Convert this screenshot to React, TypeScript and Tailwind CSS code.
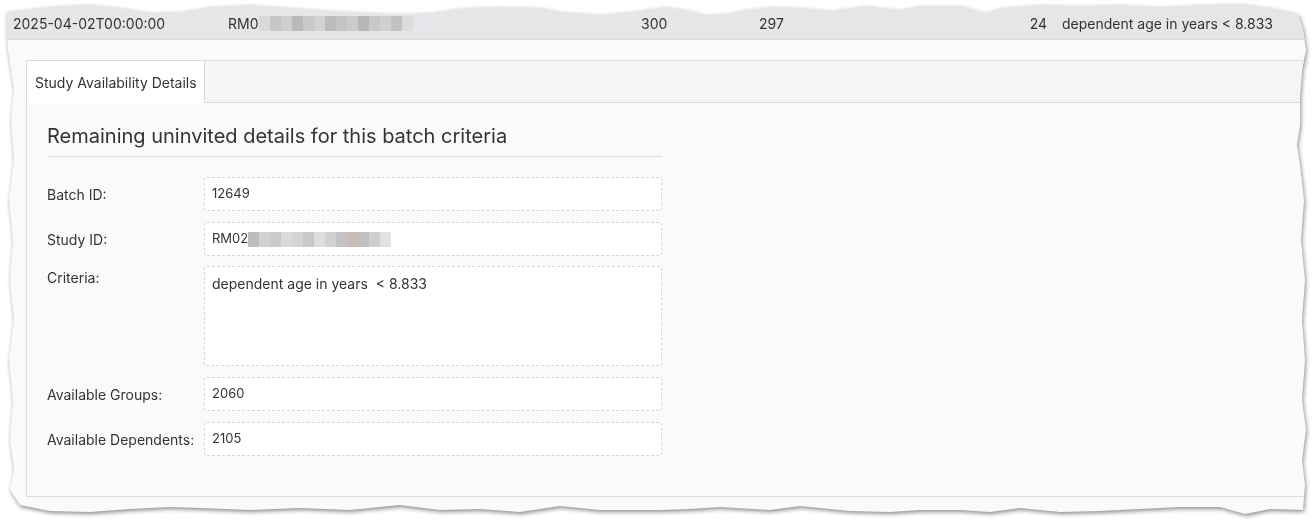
const torn =
  '[clip-path:polygon(7px_12px,30px_9px,60px_6px,90px_5px,120px_8px,150px_13px,180px_12px,210px_7px,250px_5px,290px_8px,330px_11px,370px_13px,400px_14px,430px_13px,465px_8px,500px_7px,540px_8px,560px_12px,600px_15px,630px_12px,665px_7px,685px_10px,705px_15px,725px_14px,745px_10px,770px_7px,800px_8px,830px_11px,865px_6px,900px_10px,920px_6px,960px_6px,985px_13px,1000px_8px,1040px_5px,1080px_6px,1120px_5px,1160px_7px,1200px_5px,1240px_4px,1270px_8px,1298px_14px,1303px_30px,1306px_50px,1302px_70px,1300px_95px,1300px_125px,1297px_145px,1300px_165px,1304px_200px,1301px_240px,1305px_280px,1302px_320px,1305px_360px,1302px_400px,1306px_430px,1302px_460px,1305px_485px,1303px_510px,1270px_509px,1245px_514px,1220px_507px,1180px_507px,1140px_509px,1100px_511px,1060px_512px,1020px_508px,990px_512px,960px_510px,920px_510px,890px_512px,850px_511px,800px_506px,770px_510px,720px_507px,690px_509px,660px_510px,600px_510px,560px_506px,520px_512px,480px_509px,440px_510px,400px_505px,350px_510px,300px_508px,250px_510px,200px_508px,170px_507px,130px_509px,90px_512px,50px_511px,20px_505px,10px_490px,14px_470px,10px_440px,13px_400px,9px_360px,14px_320px,10px_280px,13px_240px,9px_200px,14px_160px,11px_120px,14px_90px,11px_70px,8px_50px,7px_30px)]'

const blurTop = ['#d9d9d9', '#c6c6c6', '#cfcfcf', '#b9b9b9', '#c9c9c9', '#d3d3d3', '#bdbdbd', '#c4c4c4', '#cbcbcb', '#b7b7b7', '#c8c8c8', '#d0d0d0', '#c2c2c2', '#dcdcdc', '#e3e6ea']
const blurStudy = ['#bdbdbd', '#d2d2d2', '#cacaca', '#dadada', '#d4d4d4', '#c8c8c8', '#dedede', '#d1d1d1', '#c3c3c3', '#c7bcb6', '#c0c0c0', '#cfcfcf', '#e2e2e2']

function Blur({ colors, w }: { colors: string[]; w: number }) {
  return (
    <span className="inline-flex h-[15px] items-stretch">
      {colors.map((c, i) => (
        <span key={i} className="h-full" style={{ width: w, backgroundColor: c }} />
      ))}
    </span>
  )
}

function Field({ label, children, tall }: { label: string; children: React.ReactNode; tall?: boolean }) {
  return (
    <div className={`flex ${tall ? '-mt-px' : ''}`}>
      <div className={`w-[157px] shrink-0 text-[14px] text-[#333] ${tall ? 'pt-[1px]' : 'flex items-center'}`}>
        {label}
      </div>
      <div
        className={`w-[458px] rounded-[3px] border border-dashed border-[#d6d6d6] bg-white px-[7px] text-[13px] text-[#333] ${
          tall ? 'h-[100px] pt-[6px] text-[14px]' : 'flex h-[34px] items-center'
        }`}
      >
        {children}
      </div>
    </div>
  )
}

export default function App() {
  return (
    <div className="h-[525px] w-[1316px] bg-white font-['Inter','Noto_Sans',sans-serif]">
      <div className="h-full w-full drop-shadow-[1px_2px_2px_rgba(0,0,0,0.45)]">
        <div className={`h-full w-full bg-[#fafafa] ${torn}`}>
          <div className="flex h-[40px] items-end border-b border-[#dcdcdc] bg-[#e6e6e6] pb-[5px] text-[14px] text-[#333]">
            <span className="ml-[13px] w-[215px]">2025-04-02T00:00:00</span>
            <span className="flex w-[413px] items-center">
              RM0
              <Blur colors={blurTop} w={11} />
            </span>
            <span className="w-[118px]">300</span>
            <span className="flex-1">297</span>
            <span className="mr-[15px]">24</span>
            <span className="mr-[43px]">dependent age in years &lt; 8.833</span>
          </div>

          <div className="ml-[26px] mt-[20px] h-[437px] border-l border-t border-b border-[#dcdcdc]">
            <div className="flex h-[42px] border-b border-[#dcdcdc] bg-[#f5f5f5]">
              <div className="-mb-px flex w-[178px] items-center border-r border-[#dcdcdc] bg-white pl-[8px] pt-[1px] text-[14px] text-[#333]">
                Study Availability Details
              </div>
            </div>

            <div className="pl-[20px] pt-[19px]">
              <h2 className="w-[615px] border-b border-[#dcdcdc] pb-[6px] text-[20px] leading-[28px] text-[#333]">
                Remaining uninvited details for this batch criteria
              </h2>
              <div className="mt-[20px] flex flex-col gap-[11px]">
                <Field label="Batch ID:">12649</Field>
                <Field label="Study ID:">
                  <span className="flex items-center">
                    RM02
                    <Blur colors={blurStudy} w={11} />
                  </span>
                </Field>
                <Field label="Criteria:" tall>
                  dependent age in years&nbsp; &lt; 8.833
                </Field>
                <Field label="Available Groups:">2060</Field>
                <Field label="Available Dependents:">2105</Field>
              </div>
            </div>
          </div>
        </div>
      </div>
    </div>
  )
}
